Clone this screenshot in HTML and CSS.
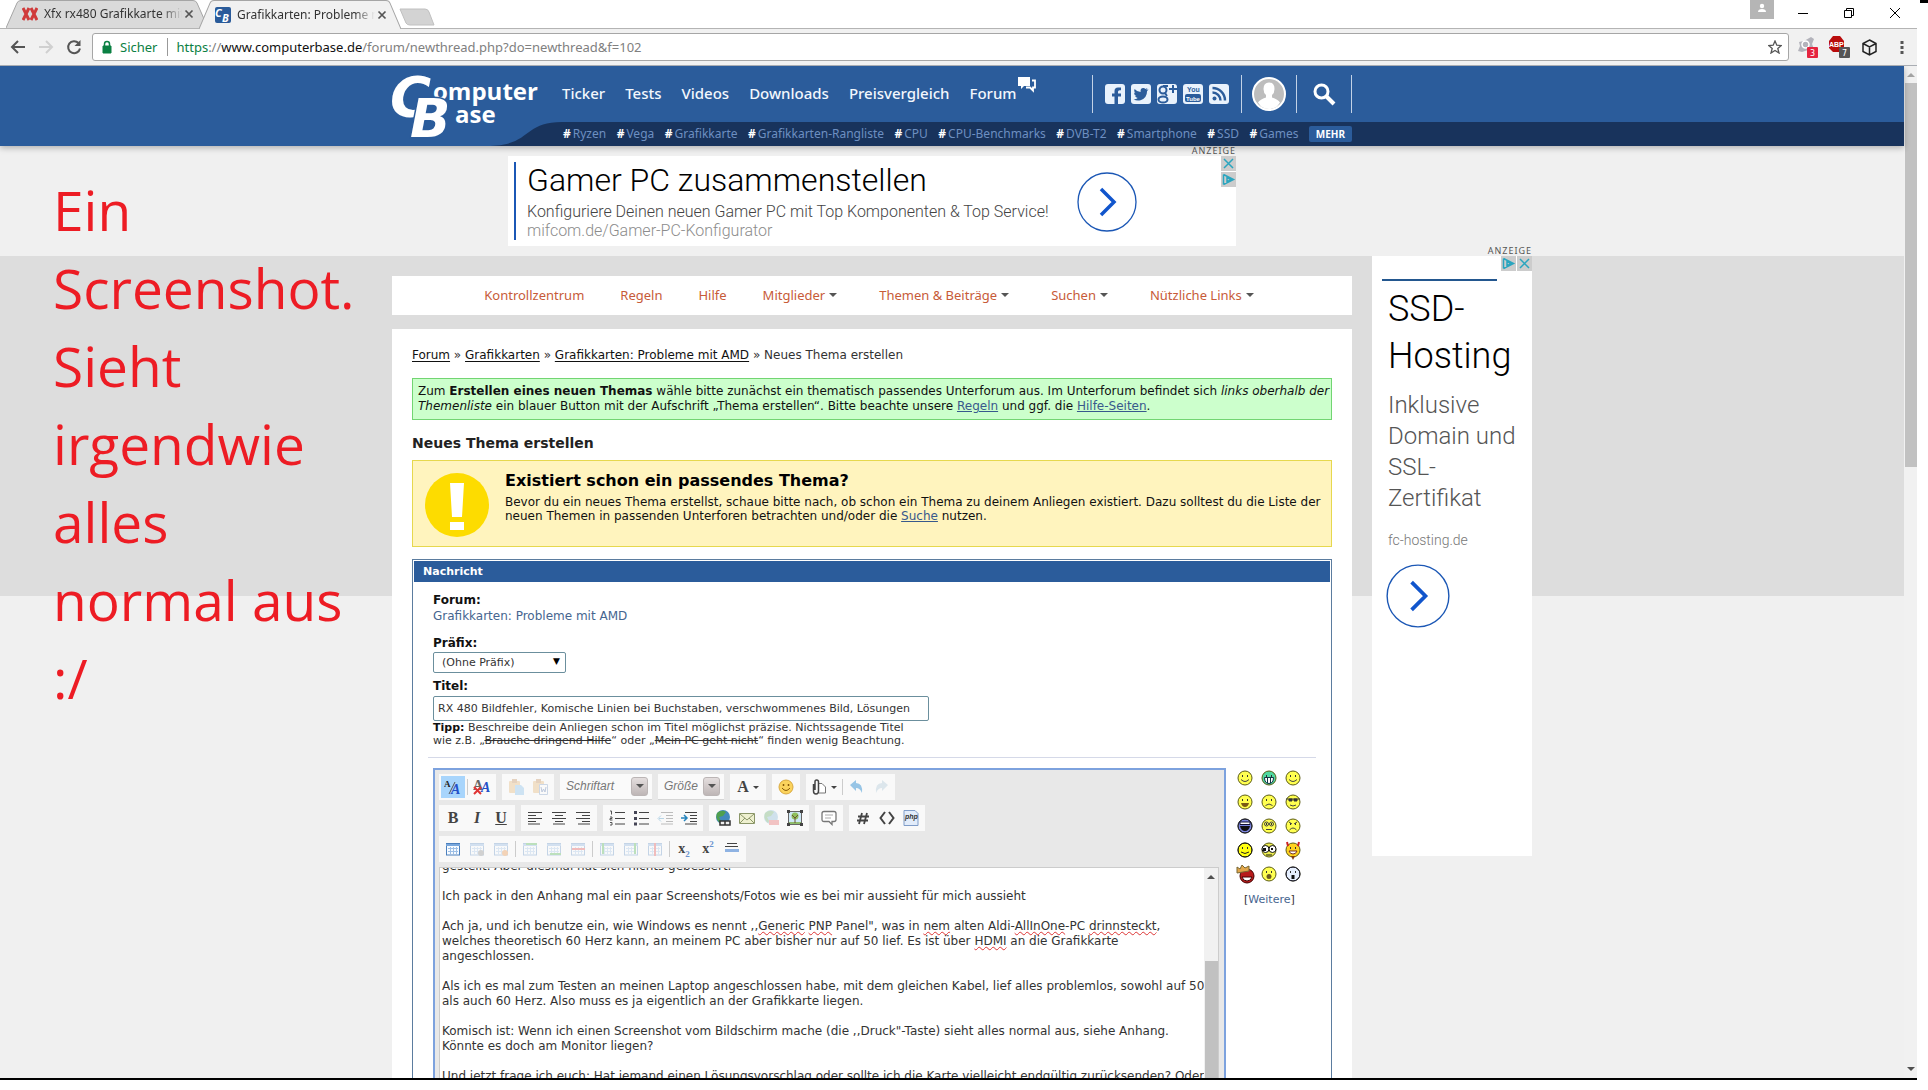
FILE: index.html
```html
<!DOCTYPE html>
<html lang="de">
<head>
<meta charset="utf-8">
<title>Grafikkarten: Probleme mit AMD - Neues Thema erstellen</title>
<link rel="stylesheet" href="styles.css">
</head>
<body>
<svg class="defs" aria-hidden="true">
  <symbol id="tab" viewBox="0 0 202 28" preserveAspectRatio="none"><path d="M0 28 L11 3 Q12 .5 15 .5 H187 Q190 .5 191 3 L202 28" stroke="#a5a5a5"/></symbol>
  <symbol id="x" viewBox="0 0 10 10"><path d="M1.500 1.500l7 7m0-7l-7 7" stroke="#555" stroke-width="1.700"/></symbol>
  <symbol id="adx" viewBox="0 0 15 15"><path d="M3 3l9 9m0-9l-9 9" stroke="#2aa5bf" stroke-width="1.500"/></symbol>
  <symbol id="adc" viewBox="0 0 15 15"><path d="M2.500 2.500v10M2.500 2.500l10 5-10 5M6 5.500v4.500l4-2.500z" fill="none" stroke="#2aa5bf" stroke-width="1.500"/></symbol>
  <symbol id="face" viewBox="0 0 16 16"><circle cx="8" cy="8" r="7" stroke="#5c5c14" /><path d="M5.500 5v2M10.500 5v2" stroke="#333"/></symbol>
  <symbol id="table" viewBox="0 0 16 16"><rect x="1.500" y="2.500" width="13" height="11.500" fill="#f7fbff" stroke="#4c80bd"/><path d="M1 4h14" stroke="#79a7dc" stroke-width="2"/><path d="M3 7.500h10M3 10.500h10M5.500 6v7M8.500 6v7M11.500 6v7" stroke="#9dbfe6"/></symbol>
  <symbol id="next" viewBox="0 0 62 62"><circle cx="31" cy="31" r="29" fill="none" stroke="#1b57b5" stroke-width="1.300"/><path d="M25 18l13 13-13 13" fill="none" stroke="#1155cc" stroke-width="3.500"/></symbol>
</svg>
<div class="window">
  <div class="tabstrip">
    <div class="tab tab-back"><svg class="tab-shape" fill="#dadada"><use href="#tab"/></svg>
      <svg class="favicon" viewBox="0 0 16 16"><path d="M1 2l6 12M7 2L1 14M9 2l6 12M15 2L9 14" stroke="#d03a3a" stroke-width="3"/></svg>
      <span class="tab-title">Xfx rx480 Grafikkarte mit</span><button class="tab-close" aria-label="Tab schließen"><svg width="10" height="10"><use href="#x"/></svg></button></div>
    <div class="tab tab-front"><svg class="tab-shape" fill="#f1f1f1"><use href="#tab"/></svg>
      <svg class="favicon" viewBox="0 0 16 16"><rect width="16" height="16" rx="2" fill="#2a5b9a"/><text x="0" y="10" class="fav-text">C</text><text x="7" y="15" class="fav-text">B</text></svg>
      <span class="tab-title">Grafikkarten: Probleme m</span><button class="tab-close" aria-label="Tab schließen"><svg width="10" height="10"><use href="#x"/></svg></button></div>
    <button class="newtab" aria-label="Neuer Tab"><svg width="36" height="18" viewBox="0 0 36 18"><path d="M1 1h25q3 0 4 3l5 13H11q-3 0-4-2z" fill="#d3d3d3" stroke="#c0c0c0"/></svg></button>
    <div class="winbuttons">
      <button class="person" aria-label="Person"><svg width="24" height="19" viewBox="0 0 24 19"><path d="M0 0h24v19H0z" fill="#b5b5b5"/><circle cx="12" cy="6" r="2.200" fill="#fff"/><path d="M8 12q0-3 4-3t4 3z" fill="#fff"/></svg></button>
      <button aria-label="Minimieren"><svg width="12" height="12"><path d="M1 6.500h10" stroke="#000"/></svg></button>
      <button aria-label="Wiederherstellen"><svg width="12" height="12"><path d="M1.500 3.500h7v7h-7zM3.500 3V1.500h7v7H9" fill="none" stroke="#000"/></svg></button>
      <button aria-label="Schließen"><svg width="12" height="12"><path d="M1 1l10 10M11 1L1 11" stroke="#000"/></svg></button>
    </div>
  </div>
  <div class="toolbar">
    <button aria-label="Zurück"><svg width="16" height="16"><path d="M15 8H2M8 2L2 8l6 6" fill="none" stroke="#555" stroke-width="2"/></svg></button>
    <button aria-label="Vor"><svg width="16" height="16"><path d="M1 8h13M8 2l6 6-6 6" fill="none" stroke="#d0d0d0" stroke-width="2"/></svg></button>
    <button aria-label="Neu laden"><svg width="16" height="16"><path d="M14 9.500A6 6 0 1 1 12.500 4" fill="none" stroke="#555" stroke-width="2"/><path d="M14.500 1v6h-6z" fill="#555"/></svg></button>
    <div class="omnibox">
      <svg width="10" height="14"><path d="M1 6h8v7H1z" fill="#0b8043" stroke="#0b8043"/><path d="M2.500 6V4a2.500 2.500 0 0 1 5 0v2" fill="none" stroke="#0b8043" stroke-width="1.500"/></svg>
      <span class="secure">Sicher</span>
      <span class="url"><span class="scheme">https</span>://<b>www.computerbase.de</b>/forum/newthread.php?do=newthread&amp;f=102</span>
      <svg width="14" height="14" viewBox="0 0 14 14"><path d="M7 1l1.800 4.200 4.500.3-3.500 3 1.200 4.500L7 10.500 3 13l1.200-4.500-3.500-3 4.500-.3z" fill="none" stroke="#555" stroke-width="1.300"/></svg>
    </div>
    <div class="extensions">
      <svg width="24" height="24" viewBox="0 0 24 24"><path d="M4 7l5-1 7-4 3 2-2 5 2 5-6 1-6 2-4-1 2-5z" fill="#b3b3bb"/><circle cx="10.500" cy="9.500" r="3.500" fill="none" stroke="#fff" stroke-width="1.500"/><rect x="12" y="12" width="11" height="11" rx="1" fill="#e5243f"/><text x="15" y="21" class="badge">3</text></svg>
      <svg width="24" height="24" viewBox="0 0 24 24"><path d="M6 1h7l4 5v7l-4 4H6l-4-4V6z" fill="#b90c0c"/><text x="2" y="12" class="abp">ABP</text><rect x="12" y="12" width="11" height="11" rx="1" fill="#555"/><text x="15" y="21" class="badge">7</text></svg>
      <svg class="cube" width="17" height="17" viewBox="0 0 17 17"><path d="M8.500 1L15 4.500v8L8.500 16 2 12.500v-8zM2 4.500L8.500 8 15 4.500M8.500 8v8" fill="none" stroke="#222" stroke-width="1.500"/></svg>
      <svg class="dots" width="4" height="14"><path d="M.5 1h3v3h-3zM.5 6h3v3h-3zM.5 11h3v3h-3z" fill="#555"/></svg>
    </div>
  </div>
  <div class="viewport">
    <div class="page">
      <header class="header">
        <div class="head-main">
          <a href="#" class="logo" aria-label="ComputerBase">
            <svg width="152" height="80" viewBox="0 0 152 80">
              <text x="-2" y="50" class="logo-big">C</text>
              <text x="41" y="34" class="logo-small">omputer</text>
              <text x="18" y="71" class="logo-big logo-b">B</text>
              <text x="63" y="57" class="logo-small">ase</text>
            </svg></a>
          <nav class="mainnav">
            <a href="#">Ticker</a><a href="#">Tests</a><a href="#">Videos</a><a href="#">Downloads</a><a href="#">Preisvergleich</a><a href="#" class="forum">Forum<svg width="18" height="16" viewBox="0 0 18 16"><path d="M0 0h12v9H6l-3 3V9H0z" fill="#fff"/><path d="M14 3.500h3v7h-2v3l-3-3H8" fill="none" stroke="#fff" stroke-width="1.800"/></svg></a>
          </nav>
          <div class="social">
            <a href="#" aria-label="Facebook"><svg width="20" height="20"><rect width="20" height="20" rx="3" fill="#e9f2fc"/><path d="M13 20v-7.500h3V9.500h-3V7.800q0-1.500 1.600-1.500H16V3.500h-3q-3.500 0-3.500 3.700v2.300H7v3h2.500V20" fill="#2b5c9b"/></svg></a>
            <a href="#" aria-label="Twitter"><svg width="20" height="20"><rect width="20" height="20" rx="3" fill="#e9f2fc"/><path d="M17.500 5.500q-.6.900-1.400 1.400Q16 14 9.500 16.200q-4 .9-7-1 2.500.2 4.200-1.200-2-.3-2.600-2h1.200Q3 11 3 8.600l1.300.3q-2-1.800-.7-4 2.500 2.900 6 3.100-.5-3.800 2.700-4 1.300 0 2.200.9l2-.8-1.200 1.700z" fill="#2b5c9b"/></svg></a>
            <a href="#" aria-label="Google+"><svg width="20" height="20"><rect width="20" height="20" rx="3" fill="#e9f2fc"/><circle cx="6" cy="6" r="3.500" fill="none" stroke="#2b5c9b" stroke-width="2"/><ellipse cx="6" cy="15.500" rx="4.500" ry="3" fill="none" stroke="#2b5c9b" stroke-width="2"/><path d="M6 2h5M8 9l2 3M16 1v8M12 5h8" stroke="#2b5c9b" stroke-width="2"/></svg></a>
            <a href="#" aria-label="YouTube"><svg width="20" height="20"><rect width="20" height="20" rx="3" fill="#e9f2fc"/><rect x="2" y="10" width="16" height="8" rx="2" fill="#2b5c9b"/><text x="4" y="8" class="you">You</text><text x="3" y="17" class="tube">Tube</text></svg></a>
            <a href="#" aria-label="RSS"><svg width="20" height="20"><rect width="20" height="20" rx="3" fill="#e9f2fc"/><circle cx="5.500" cy="14.500" r="2" fill="#2b5c9b"/><path d="M3.500 8.500a8 8 0 0 1 8 8M3.500 4a12.500 12.500 0 0 1 12.500 12.500" fill="none" stroke="#2b5c9b" stroke-width="2.400"/></svg></a>
          </div>
          <a href="#" class="avatar" aria-label="Profil"><svg width="34" height="34"><circle cx="17" cy="17" r="16" fill="#bdbdbd" stroke="#fff" stroke-width="2"/><path d="M11.500 12q0-6.500 5.500-6.500t5.500 6.500q0 4-2.500 6v2.500q6 2 8 5l-3 4q-8 5-16 0l-3-4q2-3 8-5V18q-2.500-2-2.500-6z" fill="#fff"/></svg></a>
          <a href="#" class="search" aria-label="Suche"><svg width="24" height="24"><circle cx="9.500" cy="9.500" r="6.500" fill="none" stroke="#fff" stroke-width="3"/><path d="M14 14l8 8" stroke="#fff" stroke-width="4"/></svg></a>
        </div>
        <svg class="swoosh" viewBox="0 0 170 24" preserveAspectRatio="none"><path d="M95 24C140 24 130 0 170 0V24z" fill="#18335c"/></svg>
        <div class="tags">
          <a href="#">Ryzen</a><a href="#">Vega</a><a href="#">Grafikkarte</a><a href="#">Grafikkarten-Rangliste</a><a href="#">CPU</a><a href="#">CPU-Benchmarks</a><a href="#">DVB-T2</a><a href="#">Smartphone</a><a href="#">SSD</a><a href="#">Games</a>
          <button class="mehr">MEHR</button>
        </div>
      </header>
      <div class="topad-row">
        <div class="topad-wrap">
          <div class="adlabel">ANZEIGE</div>
          <div class="topad">
            <div class="topad-text"><a href="#" class="t1">Gamer PC zusammenstellen</a><p class="t2">Konfiguriere Deinen neuen Gamer PC mit Top Komponenten &amp; Top Service!</p><p class="t3">mifcom.de/Gamer-PC-Konfigurator</p></div>
            <a href="#" class="go" aria-label="Weiter"><svg width="62" height="62"><use href="#next"/></svg></a>
            <div class="adicons adicons-v"><svg><use href="#adx"/></svg><svg><use href="#adc"/></svg></div>
          </div>
        </div>
      </div>
      <div class="body">
        <main class="content">
          <nav class="subnav">
            <a href="#">Kontrollzentrum</a><a href="#">Regeln</a><a href="#">Hilfe</a><a href="#" class="drop">Mitglieder</a><a href="#" class="drop">Themen &amp; Beiträge</a><a href="#" class="drop">Suchen</a><a href="#" class="drop">Nützliche Links</a>
          </nav>
          <div class="card">
            <div class="crumbs"><a href="#">Forum</a> » <a href="#">Grafikkarten</a> » <a href="#">Grafikkarten: Probleme mit AMD</a> » Neues Thema erstellen</div>
            <div class="note">Zum <b>Erstellen eines neuen Themas</b> wähle bitte zunächst ein thematisch passendes Unterforum aus. Im Unterforum befindet sich <i>links oberhalb der<br>Themenliste</i> ein blauer Button mit der Aufschrift „Thema erstellen“. Bitte beachte unsere <a href="#">Regeln</a> und ggf. die <a href="#">Hilfe-Seiten</a>.</div>
            <h1>Neues Thema erstellen</h1>
            <div class="warn">
              <svg width="64" height="64"><circle cx="32" cy="32" r="32" fill="#fddc00"/><path d="M25 10h14l-2 34H27zM25 49h14v8H25z" fill="#fff"/></svg>
              <div><h2>Existiert schon ein passendes Thema?</h2><p>Bevor du ein neues Thema erstellst, schaue bitte nach, ob schon ein Thema zu deinem Anliegen existiert. Dazu solltest du die Liste der<br>neuen Themen in passenden Unterforen betrachten und/oder die <a href="#">Suche</a> nutzen.</p></div>
            </div>
            <form class="panel">
              <h3>Nachricht</h3>
              <div class="fields">
                <div class="lbl">Forum:</div>
                <a href="#" class="forumlink">Grafikkarten: Probleme mit AMD</a>
                <label class="lbl" for="prefix">Präfix:</label>
                <div class="selwrap"><select id="prefix"><option>(Ohne Präfix)</option></select><span class="tri" aria-hidden="true">▼</span></div>
                <label class="lbl" for="title">Titel:</label>
                <input id="title" type="text" value="RX 480 Bildfehler, Komische Linien bei Buchstaben, verschwommenes Bild, Lösungen">
                <p class="tip"><b>Tipp:</b> Beschreibe dein Anliegen schon im Titel möglichst präzise. Nichtssagende Titel<br>wie z.B. „<s>Brauche dringend Hilfe</s>“ oder „<s>Mein PC geht nicht</s>“ finden wenig Beachtung.</p>
              </div>
              <div class="compose">
                <div class="editor">
                  <div class="tools">
                    <div class="row">
                      <div class="group"><button type="button" class="on" aria-label="Editor wechseln"><svg width="18" height="18"><text x="0" y="9" class="ia">A</text><path d="M5 16L11 4" stroke="#555"/><text x="7" y="16" class="ib">A</text></svg></button><i class="sep"></i><button type="button" aria-label="Formatierung entfernen"><svg width="18" height="18"><text x="0" y="12" class="ia ia2">A</text><text x="8" y="14" class="ib">A</text><path d="M1 9l7 7M8 9l-7 7" stroke="#e03434" stroke-width="2"/></svg></button></div>
                      <div class="group"><button type="button" class="off" aria-label="Einfügen"><svg width="16" height="16"><rect x="1" y="2" width="11" height="12" rx="1" fill="#e2a75a"/><rect x="4" y="0" width="5" height="4" fill="#b87b3b"/><path d="M7 6h6l3 3v7H7z" fill="#6db4e8"/></svg></button><button type="button" class="off" aria-label="Aus Word einfügen"><svg width="16" height="16"><rect x="1" y="2" width="11" height="12" rx="1" fill="#e2a75a"/><rect x="4" y="0" width="5" height="4" fill="#b87b3b"/><path d="M7.500 5.500h8v10h-8z" fill="#fff" stroke="#678abc"/><path d="M9 8l1 5 1.500-3 1.500 3 1-5" fill="none" stroke="#345a9b"/></svg></button></div>
                      <div class="combo"><select class="face" aria-label="Schriftart"><option>Schriftart</option></select><span class="arrow" aria-hidden="true"></span></div>
                      <div class="combo"><select class="size" aria-label="Größe"><option>Größe</option></select><span class="arrow" aria-hidden="true"></span></div>
                      <div class="group"><button type="button" class="wide" aria-label="Textfarbe"><span class="glyph">A</span><i class="caret"></i></button></div>
                      <div class="group"><button type="button" aria-label="Smiley"><svg width="16" height="16"><circle cx="8" cy="8" r="7" fill="#fbd35c" stroke="#d9a93f"/><path d="M5.500 5v2M10.500 5v2" stroke="#8a5b08" stroke-width="1.500"/><path d="M4 9q4 5 8 0" fill="none" stroke="#8a5b08"/></svg></button></div>
                      <div class="group"><button type="button" class="wide" aria-label="Anhang"><svg width="16" height="16"><path d="M7 4.500h4l3.500 3.500v6H8" fill="#fff" stroke="#777"/><path d="M2.500 5v7q0 3 2.500 3t2.500-3V3q0-2-1.800-2T4 3v8" fill="none" stroke="#444" stroke-width="1.500"/></svg><i class="caret"></i></button><i class="sep"></i><button type="button" class="half" aria-label="Rückgängig"><svg width="16" height="16"><path d="M1 6l6-5v3q7 0 6 10-2-5-6-5v3z" fill="#6fb0de"/></svg></button><button type="button" class="off" aria-label="Wiederholen"><svg width="16" height="16"><path d="M15 6L9 1v3Q2 4 3 14q2-5 6-5v3z" fill="#9bbbcf"/></svg></button></div>
                    </div>
                    <div class="row">
                      <div class="group"><button type="button" aria-label="Fett"><span class="glyph">B</span></button><button type="button" aria-label="Kursiv"><span class="glyph"><i>I</i></span></button><button type="button" aria-label="Unterstrichen"><span class="glyph"><u>U</u></span></button></div>
                      <div class="group"><button type="button" aria-label="Linksbündig"><svg width="16" height="16"><path d="M1 2.500h14M1 5.500h8M1 8.500h14M1 11.500h8M1 14h12" stroke="#444"/></svg></button><button type="button" aria-label="Zentriert"><svg width="16" height="16"><path d="M1 2.500h14M4 5.500h8M1 8.500h14M4 11.500h8M2 14h12" stroke="#444"/></svg></button><button type="button" aria-label="Rechtsbündig"><svg width="16" height="16"><path d="M1 2.500h14M7 5.500h8M1 8.500h14M7 11.500h8M3 14h12" stroke="#444"/></svg></button></div>
                      <div class="group"><button type="button" aria-label="Nummerierte Liste"><svg width="16" height="16"><path d="M6 2.500h10M6 8.500h10M6 14h10" stroke="#444"/><path d="M1 1h1.500v3.500M1 7h2v1.500H1V10h2.500M1 12.500h2V15H1" fill="none" stroke="#555"/></svg></button><button type="button" aria-label="Liste"><svg width="16" height="16"><path d="M6 2.500h10M6 8.500h10M6 14h10" stroke="#444"/><path d="M1 1h3v3H1zM1 7h3v3H1zM1 12.500h3v3H1z" fill="#445"/></svg></button><button type="button" class="off" aria-label="Ausrücken"><svg width="16" height="16"><path d="M4 2.500h12M9 5.500h7M9 8.500h7M9 11.500h7M4 14h12" stroke="#333"/><path d="M7 8.500H2M4 5.500l-3 3 3 3" stroke="#2684bd" fill="none"/></svg></button><button type="button" aria-label="Einrücken"><svg width="16" height="16"><path d="M4 2.500h12M9 5.500h7M9 8.500h7M9 11.500h7M4 14h12" stroke="#444"/><path d="M0 8h5M3 5l3 3-3 3" stroke="#2684bd" stroke-width="1.500" fill="none"/></svg></button></div>
                      <div class="group"><button type="button" aria-label="Link"><svg width="16" height="16"><circle cx="8" cy="7" r="7" fill="#4288bd"/><path d="M2 3q5-4 9-1l-3 4-4 1 2 4-1 2Q0 9 2 3z" fill="#4fa04f"/><path d="M5 11h5v4H5zM10 11h5v4h-5z" fill="#eee" stroke="#333" stroke-width="1.500"/></svg></button><button type="button" aria-label="E-Mail"><svg width="16" height="16"><path d="M.5 3.500h15v10H.5z" fill="#eef0cf" stroke="#8b9668"/><path d="M1 4l7 6 7-6M1 13l5-5M15 13l-5-5" fill="none" stroke="#8b9668"/></svg></button><button type="button" class="off" aria-label="Link entfernen"><svg width="16" height="16"><circle cx="8" cy="7" r="7" fill="#72acd0"/><path d="M2 3q5-4 9-1l-3 4-4 1 2 4-1 2Q0 9 2 3z" fill="#4fa04f"/><path d="M6 10h10v5H6z" fill="#e34949"/></svg></button><button type="button" aria-label="Grafik"><svg width="16" height="16"><path d="M1.500 1.500h13v13h-13z" fill="#cfe8f6" stroke="#666"/><path d="M2 12h12v2H2z" fill="#8fbd6b"/><circle cx="8" cy="6" r="3.500" fill="#8fc05c"/><path d="M8 7v6M5 5l3 3 3-3" stroke="#6a5532" fill="none"/><path d="M0 0h3v3H0zM13 0h3v3h-3zM0 13h3v3H0zM13 13h3v3h-3z" fill="#444"/></svg></button></div>
                      <div class="group"><button type="button" aria-label="Zitat"><svg width="16" height="16"><path d="M3 1.500h10q2 0 2 2v6q0 2-2 2h-2v3l-3-3H3q-2 0-2-2v-6q0-2 2-2z" fill="#fff" stroke="#777" stroke-width="1.300"/><path d="M4 5h8M4 8h6" stroke="#aaa"/></svg></button></div>
                      <div class="group"><button type="button" aria-label="Code"><svg width="16" height="16"><path d="M7 3L4 14M12 3L9 14M3 6.500h11M2 10.500h11" stroke="#444" stroke-width="1.800"/></svg></button><button type="button" aria-label="HTML"><svg width="16" height="16"><path d="M6 2L1.500 8 6 14M10 2l4.500 6L10 14" fill="none" stroke="#444" stroke-width="2"/></svg></button><button type="button" aria-label="PHP"><svg width="16" height="16"><path d="M1 .5h11l3 3v12H1z" fill="#e2ecfa" stroke="#7f9cc8"/><text x="2" y="9" class="php">php</text></svg></button></div>
                    </div>
                    <div class="row">
                      <div class="group"><button type="button" aria-label="Tabelle"><svg width="16" height="16"><use href="#table"/></svg></button><button type="button" class="off" aria-label="Tabelle bearbeiten"><svg width="16" height="16"><use href="#table"/><circle cx="12" cy="12" r="3" fill="#777"/></svg></button><button type="button" class="off" aria-label="Tabelle löschen"><svg width="16" height="16"><use href="#table"/><circle cx="12" cy="12" r="3" fill="#e67e22"/></svg></button><i class="sep"></i><button type="button" class="off" aria-label="Zeile davor"><svg width="16" height="16"><use href="#table"/><path d="M4 3h11" stroke="#3a3" stroke-width="2"/></svg></button><button type="button" class="off" aria-label="Zeile danach"><svg width="16" height="16"><use href="#table"/><path d="M4 13h11" stroke="#3a3" stroke-width="2"/></svg></button><button type="button" class="off" aria-label="Zeile löschen"><svg width="16" height="16"><use href="#table"/><path d="M2 8h13" stroke="#d33" stroke-width="2"/></svg></button><i class="sep"></i><button type="button" class="off" aria-label="Spalte davor"><svg width="16" height="16"><use href="#table"/><path d="M4 2v11" stroke="#3a3" stroke-width="2"/></svg></button><button type="button" class="off" aria-label="Spalte danach"><svg width="16" height="16"><use href="#table"/><path d="M12 2v11" stroke="#3a3" stroke-width="2"/></svg></button><button type="button" class="off" aria-label="Spalte löschen"><svg width="16" height="16"><use href="#table"/><path d="M8 2v13" stroke="#d33" stroke-width="2"/></svg></button><i class="sep"></i><button type="button" aria-label="Tiefgestellt"><span class="script">x<sub>2</sub></span></button><button type="button" aria-label="Hochgestellt"><span class="script">x<sup>2</sup></span></button><button type="button" aria-label="Trennlinie"><svg width="16" height="16"><path d="M3 2.500h10M1 5.500h13" stroke="#444"/><path d="M1 8h14v3H1z" fill="#8fb3e3"/></svg></button></div>
                    </div>
                  </div>
                  <div class="textbox">
                    <div class="message" role="textbox" aria-label="Nachricht" contenteditable="true" spellcheck="false">
                      <p>gestellt. Aber diesmal hat sich nichts gebessert.</p>
                      <p>Ich pack in den Anhang mal ein paar Screenshots/Fotos wie es bei mir aussieht für mich aussieht</p>
                      <p>Ach ja, und ich benutze ein, wie Windows es nennt ,,<u>Generic</u> <u>PNP</u> Panel", was in <u>nem</u> alten Aldi-<u>AllInOne</u>-PC <u>drinnsteckt</u>,<br>welches theoretisch 60 Herz kann, an meinem PC aber bisher nur auf 50 lief. Es ist über <u>HDMI</u> an die Grafikkarte<br>angeschlossen.</p>
                      <p>Als ich es mal zum Testen an meinen Laptop angeschlossen habe, mit dem gleichen Kabel, lief alles problemlos, sowohl auf 50<br>als auch 60 Herz. Also muss es ja eigentlich an der Grafikkarte liegen.</p>
                      <p>Komisch ist: Wenn ich einen Screenshot vom Bildschirm mache (die ,,Druck"-Taste) sieht alles normal aus, siehe Anhang.<br>Könnte es doch am Monitor liegen?</p>
                      <p>Und jetzt frage ich euch: Hat jemand einen Lösungsvorschlag oder sollte ich die Karte vielleicht endgültig zurücksenden? Oder</p>
                    </div>
                    <div class="inner-scroll"><i class="up"></i><div class="inner-thumb"></div></div>
                  </div>
                </div>
                <div class="smileys">
                  <div class="grid">
                    <svg fill="#ffff50"><use href="#face"/><path d="M4 9.500q4 4 8 0" fill="none" stroke="#444"/></svg>
                    <svg fill="#4fd7a0"><use href="#face"/><path d="M3.500 7.500h9q0 6-4.500 6t-4.500-6z" fill="#fff" stroke="#134"/><path d="M6.500 8v5M9.500 8v5" stroke="#134"/></svg>
                    <svg fill="#ffff50"><use href="#face"/><path d="M4 9.500q4 4 8 0" fill="none" stroke="#444"/></svg>
                    <svg fill="#ffff50"><use href="#face"/><path d="M4 9h8q-1 4-4 4T4 9z" fill="#7a5a14"/></svg>
                    <svg fill="#ffff50"><use href="#face"/><path d="M4.500 11.500q3.500-3 7 0" fill="none" stroke="#444"/></svg>
                    <svg fill="#ffff50"><use href="#face"/><path d="M1 5h14M4 5h3v2H4zM9 5h3v2H9z" fill="#333" stroke="#333"/><path d="M5 11q3 2 6 0" fill="none" stroke="#444"/></svg>
                    <svg fill="#7b84dc"><use href="#face"/><circle cx="8" cy="8" r="7" fill="none" stroke="#113"/><path d="M3 4h10v2.500H3z" fill="#fff" stroke="#113"/><path d="M3 8h10q-1 5-5 5T3 8z" fill="#111"/></svg>
                    <svg fill="#ffff50"><use href="#face"/><circle cx="5.500" cy="6" r="2" fill="none" stroke="#444"/><circle cx="10.500" cy="6" r="2" fill="none" stroke="#444"/><path d="M5 11.500h6" stroke="#444"/></svg>
                    <svg fill="#ffff50"><use href="#face"/><path d="M4.500 12q3.500-4 7 0M4 4l3 2M12 4L9 6" fill="none" stroke="#444"/></svg>
                    <svg fill="#ffff10"><use href="#face"/><circle cx="8" cy="8" r="7" fill="none" stroke="#111"/><path d="M4 10q4 3 8 0" fill="none" stroke="#222"/></svg>
                    <svg fill="#eeee50"><use href="#face"/><circle cx="4.500" cy="7" r="3.500" fill="#fff" stroke="#111"/><circle cx="11.500" cy="7" r="3.500" fill="#fff" stroke="#111"/><path d="M2 6h3v3H2zM10 6h2v2h-2z" fill="#111"/><path d="M5 13h6" stroke="#111"/></svg>
                    <svg fill="#ffd21e"><use href="#face"/><path d="M2 0l1 4M14 0l-1 4" stroke="#c22" stroke-width="2"/><path d="M4 9h8q-1 3-4 3T4 9z" fill="#fff" stroke="#732"/><path d="M6 14h4l-2 4z" fill="#843c0e"/></svg>
                    <svg fill="#b81b1b"><circle cx="10" cy="10" r="7" stroke="#400"/><path d="M0 7l0-6 3 2 2-4 3 3 4-2v5z" fill="#e2a64a" stroke="#763"/><path d="M5 11h10q-1 4-5 4T5 11z" fill="#fff" stroke="#400"/></svg>
                    <svg fill="#ffff50"><use href="#face"/><ellipse cx="8" cy="10.500" rx="2.500" ry="2.500" fill="#6b5a20"/></svg>
                    <svg fill="#e5efff"><use href="#face"/><circle cx="8" cy="8" r="7" fill="none" stroke="#113"/><path d="M6.500 9h3v4h-3z" fill="#111"/></svg>
                  </div>
                  <div class="more">[<a href="#">Weitere</a>]</div>
                </div>
              </div>
            </form>
          </div>
        </main>
        <aside class="side">
          <div class="adlabel">ANZEIGE</div>
          <div class="sidead">
            <div class="adicons adicons-h"><svg><use href="#adc"/></svg><svg><use href="#adx"/></svg></div>
            <div class="bar"></div>
            <p class="s1">SSD-<br>Hosting</p>
            <p class="s2">Inklusive<br>Domain und<br>SSL-<br>Zertifikat</p>
            <p class="s3">fc-hosting.de</p>
            <a href="#" class="sgo" aria-label="Weiter"><svg width="66" height="66"><use href="#next"/></svg></a>
          </div>
        </aside>
      </div>
      <p class="caption">Ein<br>Screenshot.<br>Sieht<br>irgendwie<br>alles<br>normal aus<br>:/</p>
    </div>
    <div class="scrollbar"><i class="up light"></i><div class="thumb"></div><i class="down"></i></div>
  </div>
</div>
<div class="corner"></div>
</body>
</html>
```
FILE: styles.css
```css
* { box-sizing: border-box; }
body { margin: 0; background: #fff; font: 12px/15px "DejaVu Sans", sans-serif; color: #333; }
p, h1, h2, h3 { margin: 0; }
button { padding: 0; border: 0; background: none; font: inherit; color: inherit; }
svg { display: block; flex: none; }
a { color: inherit; text-decoration: none; }
.defs { position: absolute; width: 0; height: 0; }
.corner { position: absolute; right: 0; top: 0; width: 8px; height: 3px; background: #000; }

.window { height: calc(100vh - 10px); margin-right: 11px; display: flex; flex-direction: column; overflow: hidden; border-bottom: 2px solid #000; }

/* Browser frame */
.tabstrip { flex: none; display: flex; height: 29px; border-bottom: 1px solid #b4b4b4; padding-left: 6px; font: 12px/20px "Noto Sans", sans-serif; }
.tab { position: relative; display: flex; align-items: center; width: 202px; height: 28px; padding: 0 10px 0 16px; margin-right: -9px; }
.tab-front { z-index: 1; height: 29px; }
.tab-shape { position: absolute; inset: 0; width: 100%; height: 100%; }
.favicon { position: relative; width: 16px; height: 16px; margin-right: 6px; }
.fav-text { font: italic bold 11px "Open Sans", sans-serif; fill: #fff; }
.tab-title { position: relative; width: 138px; overflow: hidden; white-space: nowrap; mask-image: linear-gradient(90deg, #000 85%, transparent); }
.tab-close { position: relative; margin-left: 2px; }
.newtab { margin: 8px 0 0 7px; height: 18px; }
.winbuttons { margin-left: auto; display: flex; align-items: center; gap: 34px; padding: 0 16px 3px 0; }
.person { align-self: flex-start; margin-right: -11px; }
.toolbar { flex: none; display: flex; align-items: center; gap: 12px; height: 37px; padding: 0 13px 0 10px; background: #f1f1f1; border-bottom: 1px solid #a9adb3; }
.omnibox { flex: 1; display: flex; align-items: center; height: 28px; margin-left: -2px; padding: 0 6px 0 9px; border: 1px solid #a6a6a6; border-radius: 3px; background: #fff; font: 13px/18px "Noto Sans", sans-serif; color: #808080; }
.secure { margin: 0 8px; padding-right: 10px; border-right: 1px solid #999; color: #0b8043; }
.url { flex: 1; }
.url b { font-weight: 400; color: #111; }
.scheme { color: #0b8043; }
.extensions { display: flex; align-items: center; gap: 8px; margin-left: -6px; }
.cube { margin-left: 2px; }
.dots { margin-left: 14px; }
.badge { font: 8px "DejaVu Sans", sans-serif; fill: #fff; }
.abp { font: bold 7px "Liberation Sans", sans-serif; fill: #fff; }
.viewport { flex: 1; min-height: 0; display: flex; overflow: hidden; }
.page { position: relative; flex: 1; background: #f0f0f0; }
.scrollbar { flex: none; display: flex; flex-direction: column; align-items: center; width: 13px; background: #f1f1f1; }
.thumb { width: 12px; height: 384px; background: #c1c1c1; margin-top: 6px; }
.up, .down { border: 4px solid transparent; }
.up { border-top: 0; border-bottom-color: #505050; margin-top: 7px; }
.up.light { border-bottom-color: #a3a3a3; }
.down { border-bottom: 0; border-top-color: #505050; margin: auto 0 7px; }

/* Site header */
.header, .body, .topad-row { display: grid; grid-template-columns: 1fr 960px 160px 1fr; }
.header { position: relative; grid-template-rows: 56px 24px; background: linear-gradient(#2b5c9b 56px, transparent 0), linear-gradient(90deg, #2b5c9b 50%, #18335c 50%); box-shadow: 0 2px 6px #0004; font-family: "Noto Sans", sans-serif; }
.head-main { grid-column: 2; display: flex; align-items: center; }
.logo { align-self: flex-start; width: 170px; height: 56px; }
.logo svg { position: relative; z-index: 1; }
.logo-big { font: italic bold 56px "DejaVu Sans", sans-serif; fill: #fff; }
.logo-b { font-size: 53px; stroke: #2b5c9b; stroke-width: 3px; paint-order: stroke; }
.logo-small { font: bold 24px "Open Sans", sans-serif; fill: #fff; }
.mainnav { flex: 1; display: flex; gap: 20px; padding-bottom: 2px; font-size: 15px; line-height: 20px; font-weight: 500; color: #f2f7fd; }
.forum { display: flex; }
.forum svg { margin: -6px 0 0 1px; }
.social { display: flex; align-items: center; gap: 6px; height: 38px; padding: 0 12px; border-left: 1px solid #c3d2e6; }
.you { font: bold 7px "Liberation Sans", sans-serif; fill: #2b5c9b; }
.tube { font: bold 6px "Liberation Sans", sans-serif; fill: #fff; }
.avatar, .search { display: flex; align-items: center; height: 38px; padding: 0 10px; border-left: 1px solid #c3d2e6; }
.search { padding: 0 15px; border-right: 1px solid #c3d2e6; }
.swoosh { grid-column: 2; grid-row: 2; width: 170px; height: 24px; background: #2b5c9b; }
.tags { grid-column: 2; grid-row: 2; margin-left: 170px; display: flex; align-items: center; justify-content: space-between; padding-left: 1px; background: #18335c; font-size: 12px; line-height: 16px; color: #6d8fc1; }
.tags a::before { content: "#"; color: #fff; font-weight: 700; margin-right: 2px; }
.mehr { width: 43px; height: 16px; border-radius: 2px; background: #2b5c9b; color: #fff; font-size: 10px; line-height: 16px; font-weight: 700; }

/* Ads */
.topad-wrap { grid-column: 2; width: 728px; margin: 0 auto 10px; }
.adlabel { height: 10px; font: 9px/10px "Noto Sans", sans-serif; text-align: right; color: #555; letter-spacing: 1px; }
.topad { position: relative; display: flex; height: 90px; padding: 6px; background: #fff; font-family: Roboto, sans-serif; font-weight: 300; }
.topad-text { width: 555px; border-left: 2px solid #1b57b5; padding-left: 11px; }
.t1 { display: block; font-size: 32px; line-height: 37px; margin-bottom: 3px; color: #000; }
.t2, .t3 { font-size: 16px; line-height: 19px; white-space: nowrap; color: #444; }
.t3 { color: #8c8c8c; }
.go { margin: 9px 0 0 7px; }
.adicons { position: absolute; top: 0; right: 0; display: flex; gap: 1px; }
.adicons svg { width: 15px; height: 15px; background: #ccc; }
.adicons-v { flex-direction: column; }

.body { background: linear-gradient(#ddd, #ddd) 0 0 / 100% 340px no-repeat; }
.content { grid-column: 2; padding-top: 20px; }
.side { margin: -10px 0 0 20px; width: 160px; }
.sidead { position: relative; height: 600px; padding: 23px 10px 0; background: #fff; font-family: Roboto, sans-serif; font-weight: 300; }
.bar { width: 115px; height: 2px; background: #23578f; }
.s1, .s2, .s3 { padding-left: 6px; white-space: nowrap; }
.s1 { margin-top: 5px; font-size: 36px; line-height: 47px; color: #000; }
.s2 { margin-top: 10px; font-size: 24px; line-height: 31px; color: #555; }
.s3 { margin-top: 16px; font-size: 14px; line-height: 20px; color: #777; }
.sgo { display: block; margin: 13px 0 0 3px; }

/* Forum content */
.subnav { display: flex; justify-content: center; gap: 36px; height: 39px; align-items: center; padding-bottom: 2px; background: #fff; font: 13px/20px "Noto Sans", sans-serif; color: #c75b39; }
.drop::after { content: ""; display: inline-block; margin: 0 6px 3px 4px; border: 4px solid transparent; border-top-color: #555; border-bottom: 0; }
.card { margin-top: 14px; padding: 19px 20px 0; background: #fff; }
.crumbs a { color: #111; text-decoration: underline; text-underline-offset: 2px; }
.note { margin-top: 15px; padding: 5px; border: 1px solid #72d572; background: #cfc; color: #111; white-space: nowrap; }
.note a, .warn a { color: #38598c; text-decoration: underline; }
.card h1 { margin: 15px 0 8px; font-size: 14px; line-height: 17px; color: #222; }
.warn { display: flex; gap: 16px; height: 87px; padding: 12px; border: 1px solid #e6d84e; background: #fff4be; color: #111; }
.warn p { line-height: 14px; white-space: nowrap; }
.warn h2 { margin: -2px 0 4px; font-size: 16px; line-height: 20px; color: #000; }
.panel { margin-top: 12px; border: 1px solid #5b7c9f; }
.panel h3 { margin: 1px; height: 21px; padding-left: 9px; background: #2b5c9b; color: #fff; font-size: 11px; line-height: 21px; }
.fields { margin: 0 15px; padding: 9px 5px 10px; display: flex; flex-direction: column; align-items: flex-start; border-bottom: 1px solid #d5d9e8; }
.lbl { font-weight: 700; color: #111; line-height: 16px; height: 16px; }
.forumlink { height: 27px; line-height: 17px; color: #46658f; }
.selwrap { position: relative; margin: 1px 0 5px; }
.selwrap select { display: block; appearance: none; width: 133px; height: 21px; padding: 0 8px; border: 1px solid #6b8f9d; border-radius: 2px; background: #fff; font: 11px/19px "DejaVu Sans", sans-serif; color: #333; }
.tri { position: absolute; right: 6px; top: 2px; font-size: 9px; color: #000; }
.fields input { width: 496px; height: 25px; margin-top: 2px; padding: 0 4px; border: 1px solid #6b8f9d; border-radius: 2px; font: 11px "DejaVu Sans", sans-serif; color: #333; }
.tip { font-size: 11px; line-height: 13px; }
.tip b { color: #111; }

/* Message editor */
.compose { display: flex; padding: 10px 20px 0; gap: 10px; }
.editor { width: 793px; height: 480px; padding: 4px; border: 2px solid #7da2de; background: #e8e8e8; display: flex; flex-direction: column; }
.tools { display: flex; flex-direction: column; gap: 5px; }
.row { display: flex; gap: 6px; }
.group { display: flex; align-items: center; height: 26px; padding: 0 2px; background: #f9f9f9; }
.group button { width: 24px; height: 22px; display: flex; align-items: center; justify-content: center; }
.group .wide { width: 32px; gap: 4px; }
.on { background: #a8d5fc; }
.off { opacity: .3; }
.half { opacity: .7; }
.sep { width: 1px; height: 16px; margin: 0 2px; background: #ccc; }
.caret { border: 3px solid transparent; border-top-color: #444; border-bottom: 0; }
.glyph { font: bold 16px/20px "Liberation Serif", serif; color: #444; }
.script { font: bold 14px/18px "Liberation Serif", serif; color: #444; }
.script sub, .script sup { font-size: 9px; line-height: 0; color: #6b93cf; }
.ia { font: bold 9px "Liberation Serif", serif; fill: #222; }
.ia2 { font-size: 14px; fill: #666; }
.ib { font: italic bold 14px "Liberation Serif", serif; fill: #2350c8; }
.php { font: italic bold 7px "Liberation Sans", sans-serif; fill: #333; }
.combo { position: relative; height: 26px; border-bottom: 1px solid #d5d5d5; background: #fafafa; }
.combo select { appearance: none; border: 0; background: none; height: 24px; padding: 0 6px; font: italic 12px "Liberation Sans", sans-serif; color: #777; }
.face { width: 92px; }
.size { width: 66px; }
.arrow { position: absolute; right: 4px; top: 3px; width: 17px; height: 19px; border: 1px solid #bbb5b5; border-radius: 3px; background: linear-gradient(#e4dede, #beb6b6); }
.arrow::after { content: ""; position: absolute; left: 4px; top: 6px; border: 4px solid transparent; border-top-color: #555; border-bottom: 0; }
.textbox { flex: 1; min-height: 0; display: flex; margin-top: 5px; margin-right: 1px; border: 1px solid #ccc; background: #fff; overflow: hidden; }
.message { flex: 1; padding-left: 2px; margin-top: -9px; white-space: nowrap; outline: none; }
.message p { margin-bottom: 15px; }
.message u { text-decoration: underline wavy #d33 1px; text-underline-offset: 1px; }
.inner-scroll { width: 16px; display: flex; flex-direction: column; align-items: center; background: #f1f1f1; }
.inner-thumb { width: 13px; flex: 1; margin-top: 82px; background: #c1c1c1; }
.smileys { width: 72px; }
.grid { display: grid; grid-template-columns: repeat(3, 16px); gap: 8px; padding-left: 1px; margin-top: 2px; }
.grid svg { width: 16px; height: 16px; overflow: visible; }
.more { margin-top: 10px; padding-left: 8px; font-size: 11px; }
.more a { color: #46658f; }
.caption { position: absolute; left: 53px; top: 105px; font: 55px/78px "Open Sans", sans-serif; color: #ed1c24; }
```
